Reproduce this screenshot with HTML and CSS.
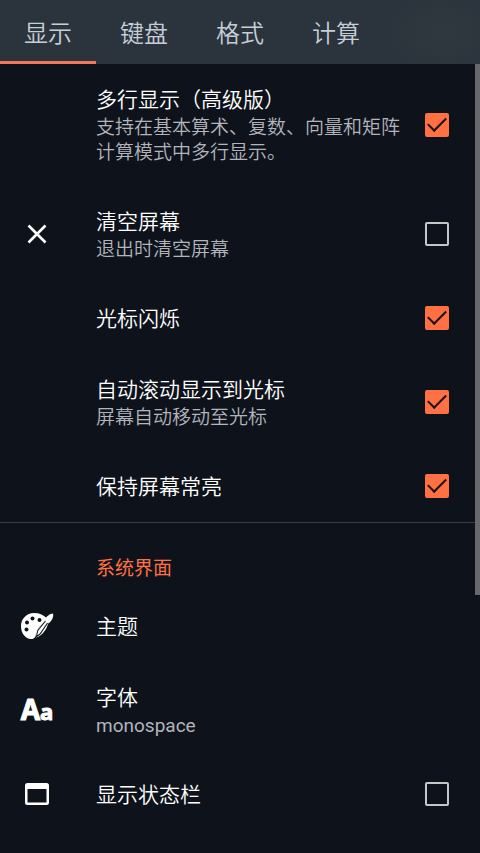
FILE: index.html
```html
<!DOCTYPE html>
<html lang="zh-CN">
<head>
<meta charset="utf-8">
<meta name="viewport" content="width=device-width, initial-scale=1">
<title>设置</title>
<link rel="stylesheet" href="styles.css">
</head>
<body>
<nav class="tabs">
  <button class="tab active" type="button">显示</button>
  <button class="tab" type="button">键盘</button>
  <button class="tab" type="button">格式</button>
  <button class="tab" type="button">计算</button>
</nav>
<main class="settings">
  <section class="group">
    <label class="row">
      <span class="icon"></span>
      <span class="text"><span class="title">多行显示（高级版）</span><span class="sub">支持在基本算术、复数、向量和矩阵计算模式中多行显示。</span></span>
      <input class="check" type="checkbox" checked>
    </label>
    <label class="row">
      <span class="icon"><svg width="24" height="24" viewBox="0 0 24 24"><path d="M3.500 3.500L20.500 20.500M20.500 3.500L3.500 20.500" fill="none" stroke="#fff" stroke-width="2.600"/></svg></span>
      <span class="text"><span class="title">清空屏幕</span><span class="sub">退出时清空屏幕</span></span>
      <input class="check" type="checkbox">
    </label>
    <label class="row">
      <span class="icon"></span>
      <span class="text"><span class="title">光标闪烁</span></span>
      <input class="check" type="checkbox" checked>
    </label>
    <label class="row">
      <span class="icon"></span>
      <span class="text"><span class="title">自动滚动显示到光标</span><span class="sub">屏幕自动移动至光标</span></span>
      <input class="check" type="checkbox" checked>
    </label>
    <label class="row">
      <span class="icon"></span>
      <span class="text"><span class="title">保持屏幕常亮</span></span>
      <input class="check" type="checkbox" checked>
    </label>
  </section>
  <section class="group">
    <h2 class="heading">系统界面</h2>
    <a class="row" href="#theme">
      <span class="icon"><svg width="34" height="28" viewBox="0 0 34 28">
        <path d="M14 1C6.500 1 1 7 1 14C1 21.500 5.500 27 11 27C14.500 27 15.500 25 15.800 22.500C16 20 16.500 18 18.500 16L27 6.500C24 3 19.500 1 14 1Z" fill="#fff"/>
        <path d="M15 20L26 7L28.500 10C27.500 14 26 18 23 21C21 23 19 24.500 16 25.500Z" fill="#fff"/>
        <path d="M33 1.500C30 1.500 26.500 4.500 24.500 7.500L28.500 11.500C31.500 9 34 5 33 1.500Z" fill="#fff"/>
        <path d="M25.500 9L18.500 17.500C16.800 19.500 17.500 21 16.500 24.500C19.500 23.500 20.500 22 21.500 20L27.500 11" fill="none" stroke="#0e131b" stroke-width="1.100"/>
        <circle cx="6.500" cy="17.500" r="2" fill="#0e131b"/>
        <circle cx="7" cy="10.500" r="2" fill="#0e131b"/>
        <circle cx="12.500" cy="6.500" r="2" fill="#0e131b"/>
        <circle cx="19.500" cy="8" r="2" fill="#0e131b"/>
      </svg></span>
      <span class="text"><span class="title">主题</span></span>
    </a>
    <a class="row" href="#font">
      <span class="icon letters">A<span class="small">a</span></span>
      <span class="text"><span class="title">字体</span><span class="sub latin">monospace</span></span>
    </a>
    <label class="row">
      <span class="icon"><svg width="26" height="24" viewBox="0 0 26 24"><path fill-rule="evenodd" d="M3.500 1H22.500Q25 1 25 3.500V20.500Q25 23 22.500 23H3.500Q1 23 1 20.500V3.500Q1 1 3.500 1ZM3.500 7V20.500H22.500V7Z" fill="#fff"/></svg></span>
      <span class="text"><span class="title">显示状态栏</span></span>
      <input class="check" type="checkbox">
    </label>
  </section>
  <div class="scrollbar"></div>
</main>
</body>
</html>
```
FILE: styles.css
```css
* {
  box-sizing: border-box;
}

body {
  margin: 0;
  min-height: 100vh;
  background: #0e131b;
  color: #fff;
  font-family: Roboto, "Noto Sans CJK SC", sans-serif;
  font-weight: 350;
}

.tabs {
  display: flex;
  height: 64px;
  background: radial-gradient(ellipse 60px 40px at calc(100% - 36px) 50%, #30383f, #2b333c) #2b333c;
}

.tab {
  padding: 2px 24px 0;
  border: 0;
  border-bottom: 3px solid transparent;
  background: none;
  color: #c6ced8;
  font: inherit;
  font-size: 24px;
}

.tab.active {
  border-bottom-color: #f0795a;
}

.settings {
  position: relative;
}

.group + .group {
  border-top: 1px solid #383c43;
}

.heading {
  margin: 0;
  padding: 33px 30px 10px 96px;
  color: #ff7043;
  font-size: 19px;
  font-weight: 400;
  line-height: 25px;
}

.row {
  display: flex;
  align-items: center;
  padding: 20px 31px 21px 20px;
  color: inherit;
  text-decoration: none;
}

.icon {
  display: flex;
  flex: none;
  justify-content: center;
  align-items: center;
  width: 34px;
  margin-right: 42px;
}

.letters {
  align-items: baseline;
  font-family: "Noto Sans", sans-serif;
  font-size: 28px;
  font-weight: 700;
  line-height: 24px;
  -webkit-text-stroke: 1px #fff;
}

.small {
  font-size: 22px;
}

.text {
  flex: 1;
  min-width: 0;
  padding-top: 3px;
}

.title,
.sub {
  display: block;
}

.title {
  font-size: 21px;
  line-height: 27px;
}

.sub {
  margin-top: 1px;
  color: #b2b5bb;
  font-size: 19px;
  line-height: 25px;
}

.latin {
  font-weight: 400;
}

.check {
  appearance: none;
  flex: none;
  width: 24px;
  height: 24px;
  margin: 0 0 0 24px;
  border: 2px solid #c4c6c9;
  border-radius: 2px;
}

.check:checked {
  display: grid;
  place-items: center;
  border-color: #ff7043;
  background: #ff7043;
}

.check:checked::before {
  content: "";
  width: 16px;
  height: 8px;
  margin-bottom: 6px;
  border: solid #1c0f10;
  border-width: 0 0 2px 2px;
  transform: rotate(-45deg);
}

.scrollbar {
  position: absolute;
  top: 0;
  right: 0;
  width: 5px;
  height: 531px;
  background: #66686b;
}
```
